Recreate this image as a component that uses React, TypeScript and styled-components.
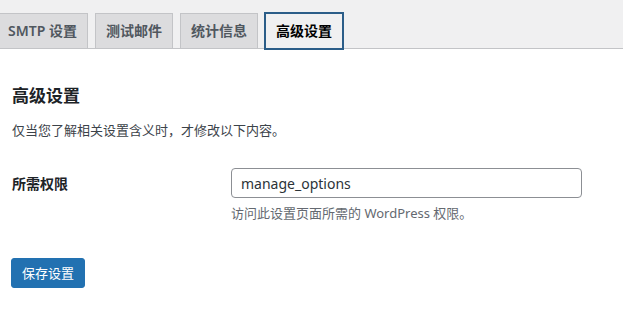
import styled, { createGlobalStyle } from 'styled-components'

const GlobalStyle = createGlobalStyle`
  html, body {
    margin: 0;
    padding: 0;
    background: #ffffff;
  }
  body {
    font-family: "Noto Sans", "Noto Sans CJK SC", sans-serif;
    color: #1d2327;
    overflow: hidden;
  }
`

const Page = styled.div`
  width: 623px;
  height: 315px;
  overflow: hidden;
`

const TabBar = styled.nav`
  display: flex;
  align-items: flex-start;
  gap: 7px;
  padding: 13px 0 0 0;
  margin-left: -3px;
  background: #f0f0f1;
  border-bottom: 1px solid #c3c4c7;
`

const Tab = styled.a<{ $active?: boolean }>`
  display: block;
  box-sizing: border-box;
  height: 36px;
  margin-bottom: -1px;
  padding: 5px 10px;
  font-size: 14px;
  line-height: 24px;
  font-weight: 600;
  white-space: nowrap;
  text-decoration: none;
  cursor: pointer;
  color: ${({ $active }) => ($active ? '#000000' : '#50575e')};
  background: ${({ $active }) => ($active ? '#f0f0f1' : '#dcdcde')};
  border: 1px solid ${({ $active }) => ($active ? '#2b5d88' : '#c3c4c7')};
  box-shadow: ${({ $active }) => ($active ? '0 0 0 1px #2b5d88' : 'none')};
  position: relative;
`

const Content = styled.main`
  padding: 35px 12px 0 12px;
`

const Title = styled.h2`
  margin: 0;
  font-size: 17px;
  line-height: 24px;
  font-weight: 600;
  color: #1d2327;
`

const Intro = styled.p`
  margin: 12px 0 0 0;
  font-size: 13px;
  line-height: 20px;
  color: #3c434a;
`

const FormRow = styled.div`
  display: grid;
  grid-template-columns: 219px 351px;
  margin-top: 28px;
`

const Label = styled.label`
  display: flex;
  align-items: center;
  height: 30px;
  font-size: 14px;
  font-weight: 600;
  color: #1d2327;
`

const Field = styled.div`
  display: flex;
  flex-direction: column;
`

const Input = styled.input`
  box-sizing: border-box;
  width: 351px;
  height: 30px;
  padding: 0 9px;
  border: 1px solid #8c8f94;
  border-radius: 4px;
  background: #ffffff;
  font-family: inherit;
  font-size: 14px;
  color: #2c3338;
  outline: none;
`

const Help = styled.p`
  margin: 5px 0 0 0;
  font-size: 13px;
  line-height: 20px;
  color: #646970;
`

const SaveButton = styled.button`
  display: block;
  margin: 35px 0 0 -1px;
  height: 30px;
  padding: 0 10px;
  border: 1px solid #2271b1;
  border-radius: 3px;
  background: #2271b1;
  color: #ffffff;
  font-family: inherit;
  font-size: 13px;
  line-height: 28px;
  cursor: pointer;
`

const tabs = ['SMTP 设置', '测试邮件', '统计信息', '高级设置']

const App = () => {
  return (
    <Page>
      <GlobalStyle />
      <TabBar>
        {tabs.map((tab, index) => (
          <Tab key={tab} $active={index === 3}>
            {tab}
          </Tab>
        ))}
      </TabBar>

      <Content>
        <Title>高级设置</Title>
        <Intro>仅当您了解相关设置含义时，才修改以下内容。</Intro>

        <FormRow>
          <Label htmlFor="capability">所需权限</Label>
          <Field>
            <Input id="capability" defaultValue="manage_options" />
            <Help>访问此设置页面所需的 WordPress 权限。</Help>
          </Field>
        </FormRow>

        <SaveButton>保存设置</SaveButton>
      </Content>
    </Page>
  )
}

export default App
